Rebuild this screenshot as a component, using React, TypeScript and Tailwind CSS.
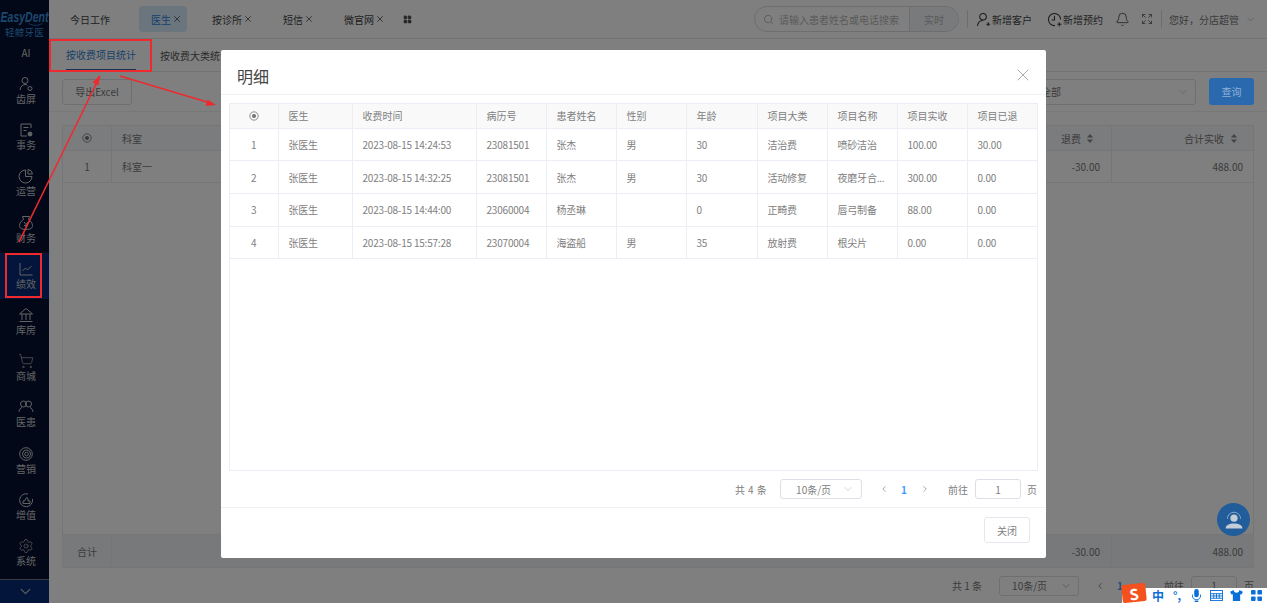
import { Bell, ChevronDown, ChevronLeft, ChevronRight, Expand, LayoutGrid, Search, ShoppingCart, Settings, X } from 'lucide-react';
import type { ReactNode } from 'react';

const font = "font-['Noto_Sans_CJK_SC','Liberation_Sans',sans-serif]";

const icon = 'h-[16px] w-[16px] fill-none stroke-current stroke-[1]';

const navItems: { label: string; icon: ReactNode; active?: boolean }[] = [
  {
    label: '齿屏',
    icon: (
      <svg viewBox="0 0 16 16" className={icon}>
        <circle cx="7" cy="4.500" r="3" />
        <path d="M2 14c.5-3.500 2.500-5.500 5-5.500 1 0 2 .3 2.600 1" />
        <circle cx="12" cy="12.500" r="2" />
      </svg>
    ),
  },
  {
    label: '事务',
    icon: (
      <svg viewBox="0 0 16 16" className={icon}>
        <path d="M13 6V2H3v12h6" />
        <path d="M5.500 5.500h5M5.500 8.500h3" />
        <circle cx="12" cy="12" r="2" fill="currentColor" />
      </svg>
    ),
  },
  {
    label: '运营',
    icon: (
      <svg viewBox="0 0 16 16" className={icon}>
        <path d="M7.500 2a6.500 6.500 0 1 0 6.500 6.500H7.500z" />
        <path d="M10 1.500a5 5 0 0 1 4.500 4.500H10z" />
      </svg>
    ),
  },
  {
    label: '财务',
    icon: (
      <svg viewBox="0 0 16 16" className={icon}>
        <path d="M5.500 4.500 4.500 1.500h7l-1 3c2.500 1.500 4 4 4 6 0 2.500-2 4-6.500 4s-6.500-1.500-6.500-4c0-2 1.500-4.500 4-6z" />
        <path d="M6 7l2 2.500L10 7M8 9.500V13M6 10.500h4" />
      </svg>
    ),
  },
  {
    label: '绩效',
    active: true,
    icon: (
      <svg viewBox="0 0 16 16" className={icon}>
        <path d="M2 2v12h12.500" />
        <path d="M4.500 10l3-3 2 2 4-4" />
      </svg>
    ),
  },
  {
    label: '库房',
    icon: (
      <svg viewBox="0 0 16 16" className={icon}>
        <path d="M1.500 7 8 1.500 14.500 7z" />
        <path d="M4 7v6M12 7v6M8 7v6M1.500 14.500h13" />
      </svg>
    ),
  },
  { label: '商城', icon: <ShoppingCart size={16} strokeWidth={1} /> },
  {
    label: '医患',
    icon: (
      <svg viewBox="0 0 16 16" className={icon}>
        <circle cx="5.500" cy="5" r="3" />
        <circle cx="10.500" cy="5" r="3" />
        <path d="M1 13c.3-2.500 1.500-4 3-4.500M15 13c-.3-2.500-1.500-4-3-4.500" />
      </svg>
    ),
  },
  {
    label: '营销',
    icon: (
      <svg viewBox="0 0 16 16" className={icon}>
        <circle cx="8" cy="8" r="6.300" />
        <circle cx="8.500" cy="8" r="4" />
        <circle cx="8.500" cy="8" r="1.800" />
      </svg>
    ),
  },
  {
    label: '增值',
    icon: (
      <svg viewBox="0 0 16 16" className={icon}>
        <path d="M10 2a6.500 6.500 0 1 0 4.500 5" />
        <path d="M5 11.500V9h1.500L8.500 5.500l1.500 1v2.500h2v2.500z" />
      </svg>
    ),
  },
  { label: '系统', icon: <Settings size={16} strokeWidth={1} /> },
];

const topTabs = [
  { label: '按诊所', w: 'w-[71px]' },
  { label: '短信', w: 'w-[61px]' },
  { label: '微官网', w: 'w-[59px]' },
];

const rows = [
  ['1', '张医生', '2023-08-15 14:24:53', '23081501', '张杰', '男', '30', '洁治费', '喷砂洁治', '100.00', '30.00'],
  ['2', '张医生', '2023-08-15 14:32:25', '23081501', '张杰', '男', '30', '活动修复', '夜磨牙合...', '300.00', '0.00'],
  ['3', '张医生', '2023-08-15 14:44:00', '23060004', '杨丞琳', '', '0', '正畸费', '唇弓制备', '88.00', '0.00'],
  ['4', '张医生', '2023-08-15 15:57:28', '23070004', '海盗船', '男', '35', '放射费', '根尖片', '0.00', '0.00'],
];

const headers = ['医生', '收费时间', '病历号', '患者姓名', '性别', '年龄', '项目大类', '项目名称', '项目实收', '项目已退'];
const colWidths = ['w-[48px]', 'w-[74px]', 'w-[124px]', 'w-[70px]', 'w-[70px]', 'w-[70px]', 'w-[71px]', 'w-[70px]', 'w-[70px]', 'w-[70px]', 'w-[70px]'];

function SortIcon() {
  return (
    <svg viewBox="0 0 8 10" className="h-[9px] w-[8px] fill-[#888]">
      <path d="M4 0l3.500 4h-7zM4 10 .5 6h7z" />
    </svg>
  );
}

function Sidebar() {
  return (
    <aside className="flex h-full w-[49px] shrink-0 flex-col bg-[#041030] text-[#c8c8c8]">
      <div className="relative flex h-[44px] flex-col items-center overflow-hidden pt-[10px]">
        <div className="origin-center scale-y-[1.4] font-['Liberation_Sans',sans-serif] text-[10.5px] font-bold italic leading-[12px] whitespace-nowrap text-[#3a8fd8]">
          EasyDent
        </div>
        <svg viewBox="0 0 20 4" className="absolute left-[27px] top-[23px] h-[3px] w-[17px] fill-none stroke-[#3a8fd8]">
          <path d="M1 .5c5 3.500 13 3.500 18 0" />
        </svg>
        <div className="mt-[5px] text-[9.500px] leading-[10px] tracking-[0.2px] text-[#3a8fd8]">轻鲸牙医</div>
      </div>
      <div className="flex h-[18px] items-center justify-center pl-[3px] text-[10px] leading-none">AI</div>
      <nav className="mt-[6px] flex flex-col">
        {navItems.map((item) => (
          <div
            key={item.label}
            className={`flex h-[46.2px] flex-col items-center justify-center pl-[3px] ${item.active ? 'bg-[#062a74]' : ''}`}
          >
            {item.icon}
            <span className="text-[10px] leading-[14px]">{item.label}</span>
          </div>
        ))}
      </nav>
      <div className="mt-auto flex h-[24px] items-center justify-center border-t border-[#6b7280] bg-[#062a74] pl-[2px]">
        <ChevronDown size={17} strokeWidth={1.5} />
      </div>
    </aside>
  );
}

function TopBar() {
  return (
    <header className="flex h-[39px] shrink-0 items-center border-b border-[#e5e7eb] bg-white pl-[21px] text-[10px] text-[#444]">
      <span className="w-[69px]">今日工作</span>
      <div className="flex h-[26px] w-[48px] items-center gap-[1px] rounded-[4px] bg-[#d6ebfb] pl-[12px] text-[#2f80d8]">
        医生 <X size={10} className="text-[#555]" />
      </div>
      <div className="ml-[25px] flex">
        {topTabs.map((t) => (
          <div key={t.label} className={`flex items-center gap-[1px] ${t.w}`}>
            {t.label} <X size={10} className="text-[#555]" />
          </div>
        ))}
      </div>
      <LayoutGrid size={9} className="fill-[#444] text-[#444]" />
      <div className="ml-[342px] flex h-[26px] w-[205px] items-center rounded-full border border-[#d8dce3] text-[10px] text-[#b5b5b5]">
        <Search size={11} className="ml-[8px]" />
        <span className="ml-[5px] w-[130px] whitespace-nowrap">请输入患者姓名或电话搜索</span>
        <span className="flex h-full flex-1 items-center justify-center rounded-r-full border-l border-[#d8dce3] bg-[#f2f4f7]">实时</span>
      </div>
      <div className="ml-[8px] h-[18px] w-px bg-[#d8dce3]" />
      <svg viewBox="0 0 16 16" className="ml-[8px] h-[15px] w-[15px] fill-none stroke-[#333] stroke-[1.1]">
        <circle cx="7.500" cy="5" r="3.500" />
        <path d="M1.500 15c.4-3.500 2.800-6 6-6M11 13h4M13 11v4" />
      </svg>
      <span className="ml-[1px]">新增客户</span>
      <svg viewBox="0 0 16 16" className="ml-[15px] h-[15px] w-[15px] fill-none stroke-[#333] stroke-[1.1]">
        <path d="M8.500 14.500A6.500 6.500 0 1 1 14.500 8" />
        <path d="M8 4v4.500H5M11 13h4.500M13 11v4.500" />
      </svg>
      <span className="ml-[1px]">新增预约</span>
      <Bell size={15} strokeWidth={1.1} className="ml-[12px] text-[#222]" />
      <Expand size={12} strokeWidth={1.2} className="ml-[11px] text-[#333]" />
      <div className="ml-[8px] h-[18px] w-px bg-[#d8dce3]" />
      <span className="ml-[7px] whitespace-nowrap text-[#777]">您好，分店超管</span>
      <ChevronDown size={11} strokeWidth={1.2} className="ml-[6px] text-[#999]" />
    </header>
  );
}

function BackgroundPage() {
  return (
    <main className="flex min-w-0 flex-1 flex-col bg-white">
      <TopBar />
      <div className="flex h-[33px] shrink-0 items-stretch gap-[24px] border-b border-[#e5e7eb] pl-[17px] text-[10px] text-[#555]">
        <div className="flex items-center border-b-2 border-[#2f62a8] text-[#2f7fd0]">按收费项目统计</div>
        <div className="flex items-center">按收费大类统计</div>
      </div>
      <div className="flex h-[40px] shrink-0 items-center justify-between border-b border-[#eef0f3] px-[13px] text-[10px]">
        <button className="h-[26px] w-[70px] rounded-[3px] border border-[#dcdfe6] text-[#777]">导出Excel</button>
        <div className="flex items-center gap-[13px]">
          <div className="flex h-[26px] w-[156px] items-center justify-between rounded-[3px] border border-[#dcdfe6] pr-[6px] text-[#777]">
            <span>全部</span>
            <ChevronDown size={12} strokeWidth={1} className="text-[#999]" />
          </div>
          <button className="relative z-10 h-[27px] w-[45px] rounded-[3px] bg-[#2a69ae] text-[#8fb0d4]">查询</button>
        </div>
      </div>
      <div className="mx-[13px] mt-[13px] flex h-[443px] shrink-0 flex-col border border-[#eaedf1] text-[10px] text-[#777]">
        <div className="flex h-[25px] shrink-0 border-b border-[#eaedf1] bg-[#f7f8fa]">
          <div className="flex w-[49px] items-center justify-center border-r border-[#eaedf1]">
            <svg viewBox="0 0 12 12" className="h-[10px] w-[10px] fill-none stroke-[#777]">
              <circle cx="6" cy="6" r="5" />
              <circle cx="6" cy="6" r="2" fill="#777" />
            </svg>
          </div>
          <div className="flex flex-1 items-center pl-[10px]">科室</div>
          <div className="flex w-[60px] items-center gap-[5px] pl-[10px]">
            退费 <SortIcon />
          </div>
          <div className="flex w-[142px] items-center justify-end gap-[6px] border-l border-[#eaedf1] pr-[15px]">
            合计实收 <SortIcon />
          </div>
        </div>
        <div className="flex h-[32px] shrink-0 border-b border-[#eaedf1]">
          <div className="flex w-[49px] items-center justify-center border-r border-[#eaedf1]">1</div>
          <div className="flex flex-1 items-center pl-[10px]">科室一</div>
          <div className="flex w-[60px] items-center justify-end pr-[11px]">-30.00</div>
          <div className="flex w-[142px] items-center justify-end border-l border-[#eaedf1] pr-[10px]">488.00</div>
        </div>
        <div className="flex-1" />
        <div className="flex h-[33px] shrink-0 border-t border-[#eaedf1] bg-[#f0f2f5]">
          <div className="flex w-[49px] items-center justify-center border-r border-[#eaedf1]">合计</div>
          <div className="flex-1" />
          <div className="flex w-[60px] items-center justify-end pr-[11px]">-30.00</div>
          <div className="flex w-[142px] items-center justify-end border-l border-[#eaedf1] pr-[10px]">488.00</div>
        </div>
      </div>
      <div className="flex h-[35px] items-center justify-end pr-[13px] text-[10px] text-[#777]">
        <span>共 1 条</span>
        <div className="ml-[17px] flex h-[20px] w-[80px] items-center justify-between rounded-[3px] border border-[#dcdfe6] pl-[12px] pr-[6px]">
          10条/页 <ChevronDown size={12} strokeWidth={1} />
        </div>
        <ChevronLeft size={10} className="ml-[16px]" />
        <span className="ml-[12px] font-bold text-[#409eff]">1</span>
        <ChevronRight size={10} className="ml-[13px]" />
        <span className="ml-[18px]">前往</span>
        <div className="ml-[7px] flex h-[20px] w-[46px] items-center justify-center rounded-[3px] border border-[#dcdfe6]">1</div>
        <span className="ml-[7px]">页</span>
      </div>
    </main>
  );
}

function DetailDialog() {
  return (
    <div className="absolute left-[221px] top-[50px] flex h-[508px] w-[825px] flex-col rounded-[2px] bg-white text-[10px] text-[#808080]">
      <div className="flex h-[45px] shrink-0 items-center justify-between border-b border-[#eef0f4] pl-[16px] pr-[13px]">
        <span className="pt-[7px] text-[16px] text-[#444]">明细</span>
        <X size={20} strokeWidth={0.8} className="mt-[5px] text-[#808080]" />
      </div>
      <div className="mx-[8px] mt-[8px] h-[368px] shrink-0 border border-[#ebeef5]">
        <table className="w-[807px] table-fixed border-collapse">
          <colgroup>
            {colWidths.map((w, i) => (
              <col key={i} className={w} />
            ))}
          </colgroup>
          <thead>
            <tr className="h-[24px] bg-[#f9f9fa]">
              <th className="border-b border-r border-[#ebeef5] font-normal">
                <svg viewBox="0 0 12 12" className="mx-auto h-[10px] w-[10px] fill-none stroke-[#777]">
                  <circle cx="6" cy="6" r="5" />
                  <circle cx="6" cy="6" r="2" fill="#777" />
                </svg>
              </th>
              {headers.map((h, i) => (
                <th
                  key={h}
                  className={`border-b border-[#ebeef5] pl-[10px] text-left font-normal ${i < headers.length - 1 ? 'border-r' : ''}`}
                >
                  {h}
                </th>
              ))}
            </tr>
          </thead>
          <tbody>
            {rows.map((row) => (
              <tr key={row[0]} className="h-[32.700px]">
                {row.map((cell, i) => (
                  <td
                    key={i}
                    className={`border-b border-[#ebeef5] whitespace-nowrap tracking-[-0.2px] ${i === 0 ? 'text-center' : 'pl-[10px]'} ${i < row.length - 1 ? 'border-r' : ''}`}
                  >
                    {cell}
                  </td>
                ))}
              </tr>
            ))}
          </tbody>
        </table>
      </div>
      <div className="flex h-[37px] shrink-0 items-center justify-end border-b border-[#eef0f4] pr-[9px]">
        <span className="tracking-[0.4px]">共 4 条</span>
        <div className="ml-[13px] flex h-[20px] w-[82px] items-center justify-between rounded-[3px] border border-[#dcdfe6] pl-[15px] pr-[7px]">
          10条/页 <ChevronDown size={12} strokeWidth={1} className="text-[#aaa]" />
        </div>
        <ChevronLeft size={10} className="ml-[17px] text-[#999]" />
        <span className="ml-[12px] font-bold text-[#409eff]">1</span>
        <ChevronRight size={10} className="ml-[13px] text-[#999]" />
        <span className="ml-[18px]">前往</span>
        <div className="ml-[7px] flex h-[20px] w-[46px] items-center justify-center rounded-[3px] border border-[#dcdfe6]">1</div>
        <span className="ml-[6px]">页</span>
      </div>
      <div className="flex flex-1 items-start justify-end pr-[16px] pt-[9px]">
        <button className="h-[26px] w-[46px] rounded-[3px] border border-[#e4e7ed]">关闭</button>
      </div>
    </div>
  );
}

function SogouBar() {
  return (
    <div className="absolute bottom-0 right-0 flex h-[15px] w-[145px] items-center bg-white text-[#0b6fd6]">
      <div className="absolute bottom-[1px] left-0 flex h-[18px] w-[24px] -rotate-6 items-center justify-center rounded-[2px] bg-[#f4511e] text-[15px] font-bold leading-none text-white">
        S
      </div>
      <span className="ml-[30px] text-[12px] font-bold leading-none">中</span>
      <span className="ml-[9px] text-[11px] font-bold leading-none">°,</span>
      <svg viewBox="0 0 12 14" className="ml-[10px] h-[13px] w-[11px] fill-current">
        <rect x="3.500" y="0" width="5" height="9" rx="2.500" />
        <path d="M1 6v1a5 5 0 0 0 10 0V6H10v1a4 4 0 0 1-8 0V6zM4 12.500h4V14H4z" />
      </svg>
      <svg viewBox="0 0 14 12" className="ml-[8px] h-[11px] w-[13px] fill-none stroke-current">
        <rect x=".5" y=".5" width="13" height="11" />
        <path d="M.5 4h13M.5 6.500h13M.5 9h13M4 4v5M7 4v5M10 4v5" />
      </svg>
      <svg viewBox="0 0 14 12" className="ml-[7px] h-[11px] w-[13px] fill-current">
        <path d="M4 0 0 2l1.500 3L3 4.500V12h8V4.500l1.500.5L14 2l-4-2a3 3 0 0 1-6 0z" />
      </svg>
      <svg viewBox="0 0 12 12" className="ml-[8px] h-[11px] w-[11px] fill-current">
        <rect width="5" height="5" rx="1" />
        <rect x="7" width="5" height="5" rx="1" />
        <rect y="7" width="5" height="5" rx="1" />
        <rect x="7" y="7" width="5" height="5" rx="1" />
      </svg>
    </div>
  );
}

export default function App() {
  return (
    <div className={`relative flex h-[603px] w-[1267px] overflow-hidden ${font}`}>
      <Sidebar />
      <BackgroundPage />

      {/* dim layer */}
      <div className="absolute inset-0 bg-black/50" />

      {/* service button */}
      <div className="absolute left-[1217px] top-[503px] flex h-[33px] w-[33px] items-center justify-center rounded-full bg-[#215c9b]">
        <svg viewBox="0 0 20 20" className="h-[24px] w-[24px]">
          <path d="M4.500 9a5.500 5.500 0 0 1 11 0" fill="none" stroke="#8fa9c6" strokeWidth=".8" />
          <circle cx="10" cy="8.500" r="3" fill="#c4cdd8" />
          <path d="M3 17c0-2.500 3-4 7-4s7 1.500 7 4z" fill="#c4cdd8" />
        </svg>
      </div>

      <DetailDialog />

      {/* red annotations */}
      <div className="absolute left-[49px] top-[39px] h-[33px] w-[103px] border-2 border-[#ee2a2f]" />
      <div className="absolute left-[5px] top-[253px] h-[45px] w-[37px] border-2 border-[#ee2a2f]" />
      <svg viewBox="0 0 1267 603" className="pointer-events-none absolute inset-0 h-[603px] w-[1267px]">
        <path d="M19 242 100 76" stroke="#ee2a2f" strokeWidth="1.6" />
        <path d="M100 75l-1.500 10.500-6-3z" fill="#ee2a2f" />
        <path d="M120 76l92 27.500" stroke="#ee2a2f" strokeWidth="1.6" />
        <path d="M216 105l-10.500 1 2-6.500z" fill="#ee2a2f" />
      </svg>

      <SogouBar />
    </div>
  );
}
